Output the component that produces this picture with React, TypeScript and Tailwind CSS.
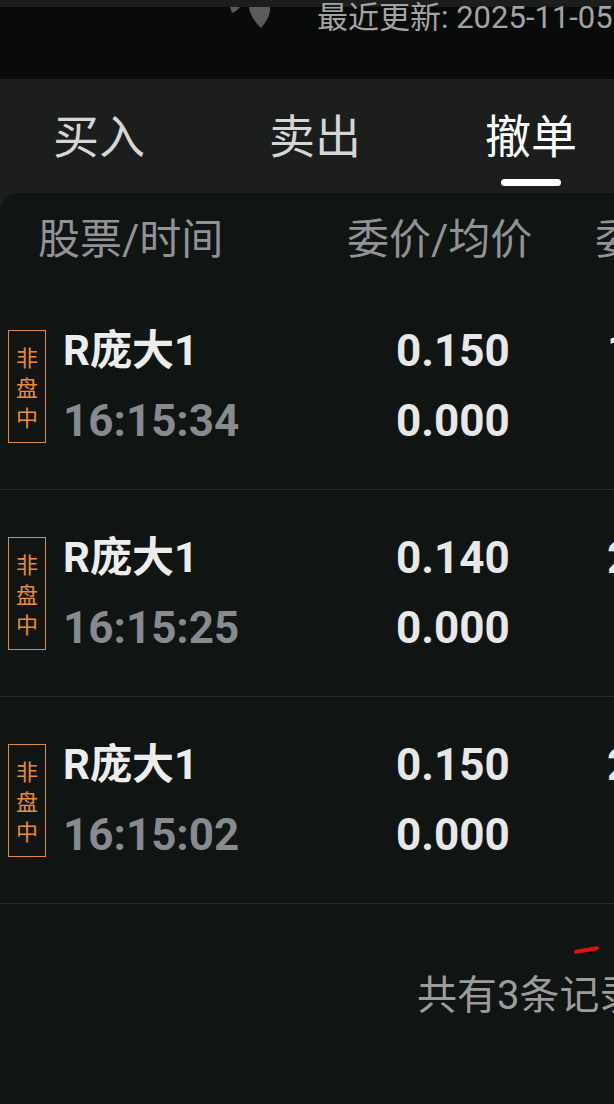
import React from 'react';

const orders = [
  { name: 'R庞大1', time: '16:15:34', price: '0.150', avg: '0.000', qty: '1000' },
  { name: 'R庞大1', time: '16:15:25', price: '0.140', avg: '0.000', qty: '2000' },
  { name: 'R庞大1', time: '16:15:02', price: '0.150', avg: '0.000', qty: '2000' },
];

const font = "font-['Roboto','Noto_Sans_CJK_SC',sans-serif]";

const Badge = () => (
  <div className="w-[38px] h-[113px] border border-[#df8a40] flex flex-col items-center justify-center text-[22px] leading-[30px] text-[#ec8c2e] font-['Noto_Sans_CJK_SC',sans-serif]">
    <span>非</span>
    <span>盘</span>
    <span>中</span>
  </div>
);

export default function App() {
  return (
    <div className={`w-[614px] h-[1104px] overflow-hidden bg-[#101412] ${font}`}>
      {/* status strip */}
      <div className="h-[7px] bg-[#1b1e1c]" />

      {/* last update */}
      <div className="h-[72px] bg-[#080b09] flex items-start">
        <svg className="ml-[228px] shrink-0" width="44" height="24" viewBox="0 0 44 24">
          <path d="M2 0 L12 0 Q9 4 4 6 Z" fill="#5a5c5b" />
          <path d="M21 0 L42 0 Q43 10 33 21 Q22 10 21 0 Z" fill="#5a5c5b" />
        </svg>
        <div className="ml-[45px] -mt-[9px] shrink-0 text-[31px] leading-[40px] text-[#a3a3a3] whitespace-nowrap">
          最近更新: 2025-11-05
        </div>
      </div>

      {/* tabs */}
      <div className="h-[114px] bg-[#1b1e1c] flex items-start pt-[27px] text-[46px] leading-[62px]">
        <div className="ml-[53px] shrink-0 text-[#d6d6d6]">买入</div>
        <div className="ml-[124px] shrink-0 text-[#d6d6d6]">卖出</div>
        <div className="ml-[124px] shrink-0 flex flex-col items-center text-white">
          <span>撤单</span>
          <span className="mt-[11px] w-[60px] h-[7px] rounded-full bg-white" />
        </div>
      </div>

      {/* list card */}
      <div className="bg-[#1b1e1c]">
        <div className="bg-[#101412] rounded-tl-[18px]">
          <div className="h-[90px] flex items-start pt-[21px] text-[42px] leading-[52px] text-[#909295] whitespace-nowrap">
            <div className="ml-[38px] w-[309px] shrink-0">股票/时间</div>
            <div className="w-[248px] shrink-0">委价/均价</div>
            <div className="shrink-0">委托/成交</div>
          </div>

          {orders.map((o, i) => (
            <div
              key={i}
              className="h-[207px] flex items-center border-b border-[#262a28] whitespace-nowrap"
            >
              <div className="ml-[8px] w-[55px] shrink-0">
                <Badge />
              </div>
              <div className="w-[333px] shrink-0 flex flex-col font-bold text-[42px] leading-[70px]">
                <span className="text-[#ededed]">{o.name}</span>
                <span className="text-[#878a8f] text-[44px]">{o.time}</span>
              </div>
              <div className="w-[211px] shrink-0 flex flex-col font-bold text-[44px] leading-[70px] text-[#e8e8e8]">
                <span>{o.price}</span>
                <span>{o.avg}</span>
              </div>
              <div className="shrink-0 flex flex-col font-bold text-[44px] leading-[70px] text-[#e8e8e8]">
                <span>{o.qty}</span>
                <span className="h-[70px]" />
              </div>
            </div>
          ))}

          {/* footer */}
          <div className="h-[200px] flex flex-col items-start pl-[417px] whitespace-nowrap">
            <span className="mt-[44px] ml-[157px] w-[25px] h-[4px] rounded-full bg-[#e01010] -rotate-[10deg]" />
            <span className="mt-[16px] text-[40px] leading-[56px] text-[#9c9c9c]">共有3条记录</span>
          </div>
        </div>
      </div>
    </div>
  );
}
